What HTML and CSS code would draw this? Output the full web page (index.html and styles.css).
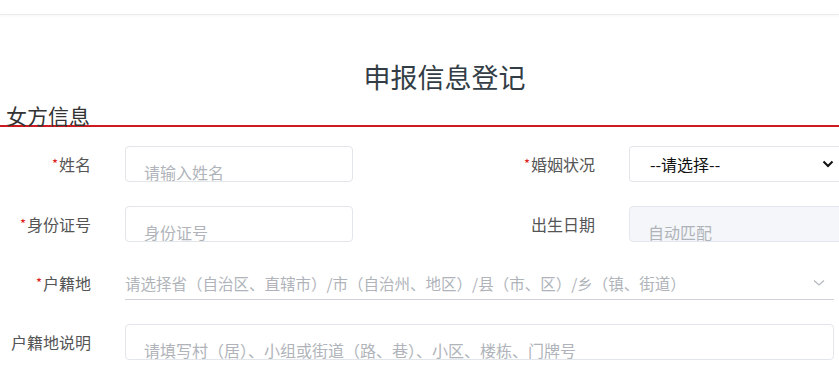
FILE: index.html
```html
<!DOCTYPE html>
<html lang="zh-CN">
<head>
  <meta charset="UTF-8" />
  <meta name="viewport" content="width=device-width, initial-scale=1.0"/>
  <title>申报信息登记</title>
  <link rel="stylesheet" href="styles.css">
</head>
<body>
  <div class="topbar"></div>

  <h2 class="titulo">申报信息登记</h2>

  <div class="secao">女方信息</div>

  <form class="formulario">
    <label class="rotulo"><span class="obrigatorio">*</span>姓名</label>
    <div class="campo"><input class="entrada" type="text" placeholder="请输入姓名"></div>
    <label class="rotulo"><span class="obrigatorio">*</span>婚姻状况</label>
    <div class="campo">
      <div class="seletor">
        <span>--请选择--</span>
        <svg width="12" height="8" viewBox="0 0 12 8"><path d="M1.5 1.5 L6 6 L10.5 1.5" fill="none" stroke="#111" stroke-width="2"/></svg>
      </div>
    </div>

    <label class="rotulo"><span class="obrigatorio">*</span>身份证号</label>
    <div class="campo"><input class="entrada" type="text" placeholder="身份证号"></div>
    <label class="rotulo">出生日期</label>
    <div class="campo"><input class="entrada" type="text" placeholder="自动匹配" disabled></div>

    <label class="rotulo"><span class="obrigatorio">*</span>户籍地</label>
    <div class="campo largo">
      <div class="cascata">
        <span>请选择省（自治区、直辖市）/市（自治州、地区）/县（市、区）/乡（镇、街道）</span>
        <svg width="12" height="8" viewBox="0 0 12 8"><path d="M1 1.5 L6 6 L11 1.5" fill="none" stroke="#b4b8bf" stroke-width="1.2"/></svg>
      </div>
    </div>

    <label class="rotulo">户籍地说明</label>
    <div class="campo largo"><input class="entrada" type="text" placeholder="请填写村（居）、小组或街道（路、巷）、小区、楼栋、门牌号"></div>
  </form>
</body>
</html>
```

FILE: styles.css
```css
html, body {
  overflow: hidden;
}

body {
  font-family: "Noto Sans CJK SC", "Noto Sans", Arial, sans-serif;
  background-color: #fff;
  color: #555;
  margin: 0;
  padding: 0;
}

.topbar {
  height: 14px;
  border-bottom: 1px solid #ececec;
  box-shadow: 0 1px 3px rgba(0,0,0,0.04);
}

.titulo {
  margin: 47px 0 13px;
  padding-left: 50px;
  text-align: center;
  font-size: 27px;
  line-height: 30px;
  font-weight: normal;
  color: #333d45;
}

.secao {
  padding-left: 6px;
  font-size: 21px;
  line-height: 20px;
  height: 20px;
  color: #333;
  border-bottom: 2px solid #cc1a20;
}

.formulario {
  display: grid;
  grid-template-columns: 125px 228px 276px 205px;
  grid-template-rows: 36px 36px 34px 36px;
  row-gap: 24px;
  margin-top: 19px;
  width: 834px;
}

.rotulo {
  display: flex;
  align-items: center;
  justify-content: flex-end;
  padding-right: 34px;
  font-size: 16px;
  line-height: 20px;
  color: #555;
  white-space: nowrap;
}

.obrigatorio {
  color: #e02020;
  font-size: 13px;
  margin-right: 1px;
}

.campo {
  min-width: 0;
}

.campo.largo {
  grid-column: 2 / 5;
}

.entrada {
  box-sizing: border-box;
  width: 228px;
  height: 36px;
  padding: 16px 18px 0;
  line-height: 20px;
  font-family: inherit;
  font-size: 16px;
  color: #333;
  border: 1px solid #e2e5ea;
  border-radius: 4px;
  outline: none;
  background: #fff;
}

.largo .entrada {
  width: 100%;
}

.entrada::placeholder {
  color: #b0b4ba;
}

.entrada:disabled {
  background-color: #f4f6f9;
  border-color: #e4e7ed;
}

.seletor {
  box-sizing: border-box;
  width: 210px;
  height: 36px;
  padding: 0 5px 0 20px;
  display: flex;
  align-items: center;
  justify-content: space-between;
  font-size: 16px;
  color: #111;
  border: 1px solid #e2e5ea;
  border-right: none;
  border-radius: 4px 0 0 4px;
}

.cascata {
  box-sizing: border-box;
  height: 34px;
  display: flex;
  align-items: center;
  justify-content: space-between;
  padding-right: 9px;
  font-size: 15.5px;
  color: #b0b4ba;
  border-bottom: 1px solid #cfd2d6;
  white-space: nowrap;
}
```
